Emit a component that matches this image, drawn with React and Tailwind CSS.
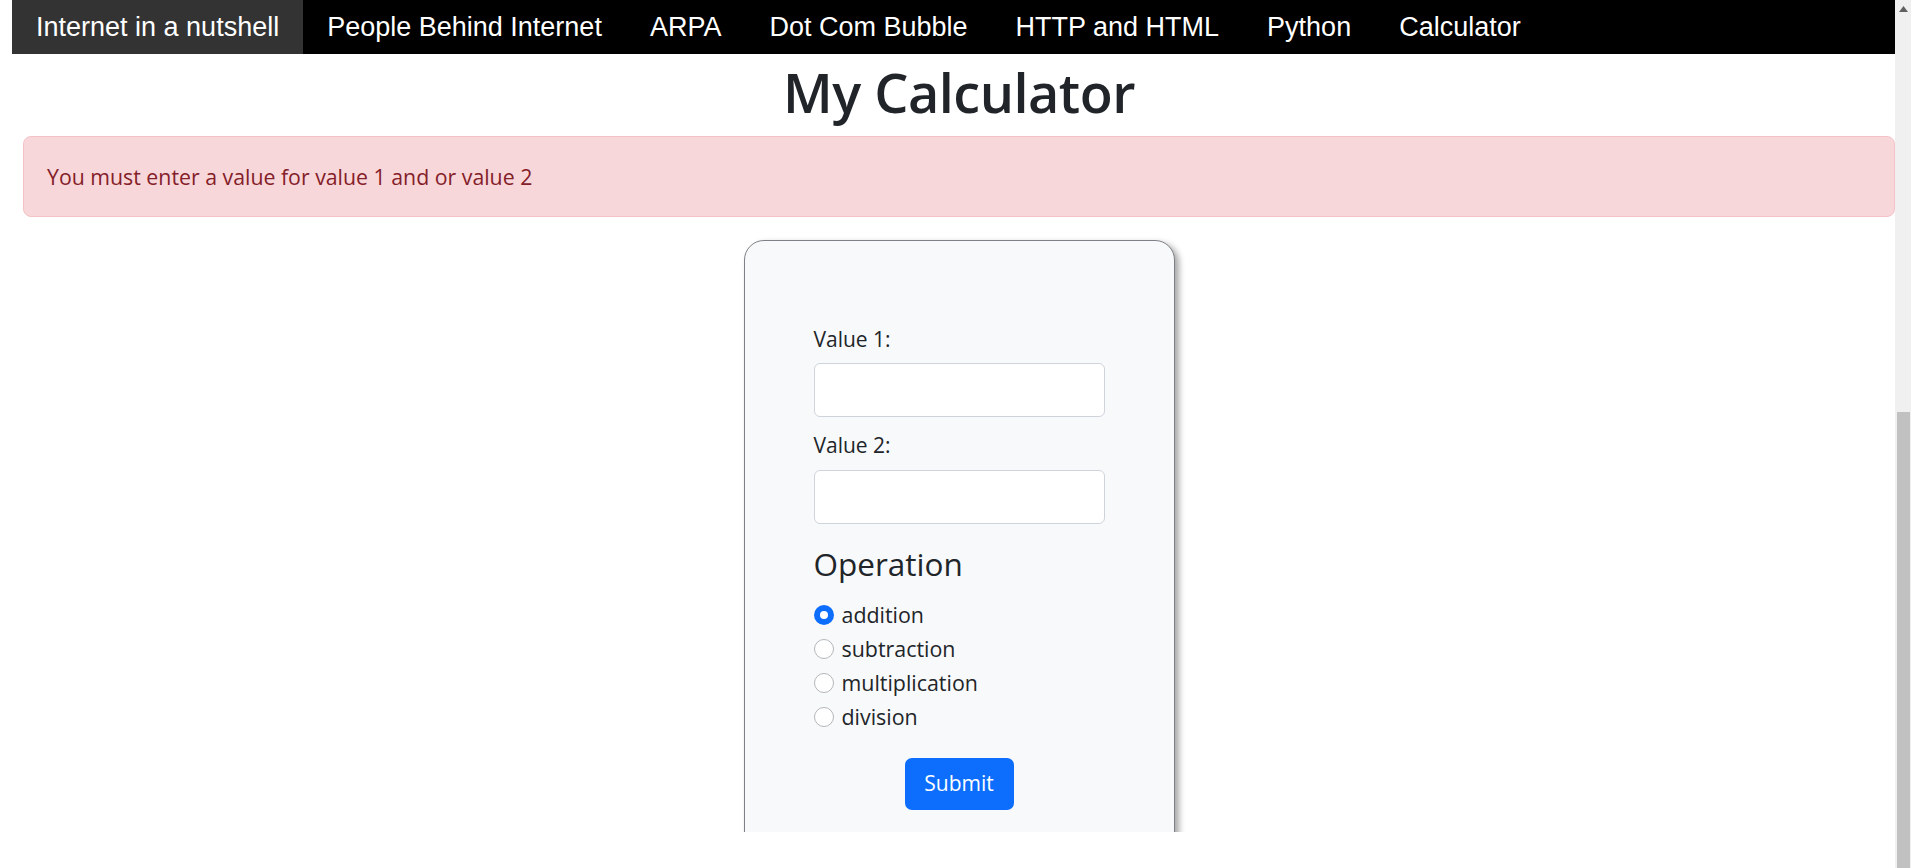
import React from 'react';

const navItems = [
  'Internet in a nutshell',
  'People Behind Internet',
  'ARPA',
  'Dot Com Bubble',
  'HTTP and HTML',
  'Python',
  'Calculator',
];

const operations = ['addition', 'subtraction', 'multiplication', 'division'];

const sans = { fontFamily: '"Open Sans", "Noto Sans", sans-serif' };

const Radio = ({ label, checked }) => (
  <label className="flex items-center h-[34px] gap-[8px] text-[21.4px] text-[#212529]">
    {checked ? (
      <span className="w-[20px] h-[20px] rounded-full bg-[#0d6efd] flex items-center justify-center">
        <span className="w-[8px] h-[8px] rounded-full bg-white"></span>
      </span>
    ) : (
      <span className="w-[20px] h-[20px] rounded-full bg-white border border-[#b3b7bc]"></span>
    )}
    <span>{label}</span>
  </label>
);

const App = () => {
  return (
    <div className="w-[1911px] h-[868px] flex overflow-hidden bg-white">
      {/* pagina */}
      <div className="w-[1895px] flex flex-col">
        {/* barra de navegacion */}
        <nav className="ml-[12px] h-[54px] bg-black flex font-['Liberation_Sans',Arial,sans-serif]">
          {navItems.map((item, i) => (
            <a
              key={item}
              className={`px-[24px] h-[54px] leading-[54px] text-[27px] text-white whitespace-nowrap ${i === 0 ? 'bg-[#333333]' : ''}`}
            >
              {item}
            </a>
          ))}
        </nav>

        <div className="ml-[23px] flex flex-col items-center" style={sans}>
          <h1 className="h-[82px] pb-[5px] flex items-center text-[54px] font-semibold text-[#212529] tracking-[-0.5px]">
            My Calculator
          </h1>

          {/* alerta */}
          <div className="w-full h-[81px] bg-[#f8d7da] border border-[#f5c2c7] rounded-[8px] px-[23px] flex items-center text-[21.3px] text-[#842029]">
            You must enter a value for value 1 and or value 2
          </div>

          {/* formulario */}
          <div className="w-full h-[615px] overflow-hidden flex justify-center pt-[23px]">
            <div className="w-[431px] h-[640px] bg-[#f8f9fa] border-[1.5px] border-[#7d8086] rounded-[20px] shadow-[4px_3px_6px_rgba(0,0,0,0.35)] pl-[69px] pr-[69px] pt-[80px] flex flex-col">
              <label className="h-[36px] leading-[36px] text-[21px] text-[#212529]">Value 1:</label>
              <input className="mt-[6px] w-[291px] h-[54px] bg-white border border-[#ced4da] rounded-[6px]" />
              <label className="mt-[10px] h-[36px] leading-[36px] text-[21px] text-[#212529]">Value 2:</label>
              <input className="mt-[7px] w-[291px] h-[54px] bg-white border border-[#ced4da] rounded-[6px]" />
              <h4 className="mt-[18px] h-[43px] leading-[43px] text-[31.5px] text-[#212529]">Operation</h4>
              <div className="mt-[13px] flex flex-col">
                {operations.map((op, i) => (
                  <Radio key={op} label={op} checked={i === 0} />
                ))}
              </div>
              <div className="mt-[24px] flex justify-center">
                <button className="w-[109px] h-[52px] bg-[#0d6efd] text-white text-[21px] rounded-[7px]">
                  Submit
                </button>
              </div>
            </div>
          </div>
        </div>
      </div>

      {/* barra de desplazamiento */}
      <div className="w-[16px] h-full bg-[#f0f0f0] flex flex-col justify-between">
        <div className="h-[17px] flex items-center justify-center">
          <svg width="9" height="6" viewBox="0 0 9 6">
            <path d="M0 6 L4.5 0 L9 6 Z" fill="#606060" />
          </svg>
        </div>
        <div className="ml-[2px] w-[13px] h-[456px] bg-[#c1c1c1]"></div>
      </div>
    </div>
  );
};

export default App;
